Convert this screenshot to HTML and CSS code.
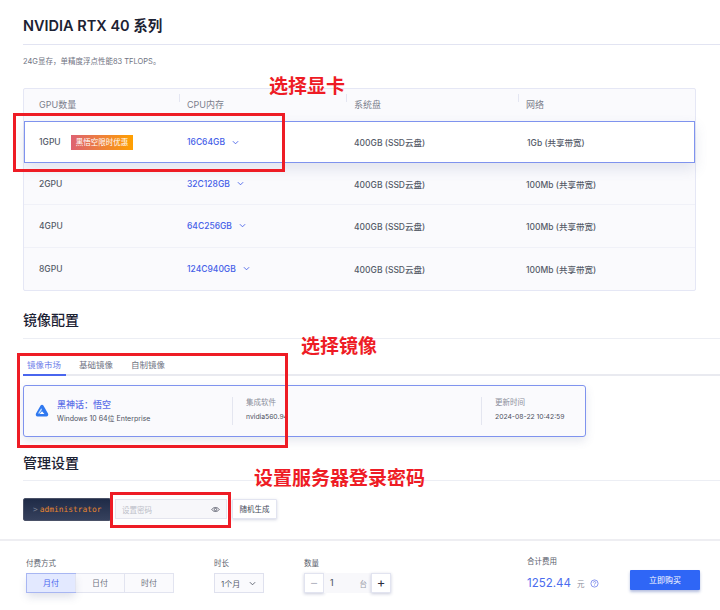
FILE: index.html
```html
<!DOCTYPE html>
<html lang="zh-CN">
<head>
    <meta charset="UTF-8">
    <meta name="viewport" content="width=device-width, initial-scale=1.0">
    <title>NVIDIA RTX 40 系列</title>
    <link rel="stylesheet" href="styles.css">
</head>
<body>
    <div class="config">
        <h1 class="series-title">NVIDIA RTX 40 系列</h1>
        <p class="series-desc">24G显存，单精度浮点性能83 TFLOPS。</p>

        <div class="spec-table">
            <div class="spec-row spec-head">
                <div class="cell cell-gpu"><span>GPU数量</span></div>
                <div class="cell cell-cpu"><i class="sep"></i><span>CPU内存</span></div>
                <div class="cell cell-disk"><i class="sep"></i><span>系统盘</span></div>
                <div class="cell cell-net"><i class="sep"></i><span>网络</span></div>
            </div>
            <div class="spec-row spec-active">
                <div class="cell cell-gpu"><span>1GPU</span><span class="promo">黑悟空限时优惠</span></div>
                <div class="cell cell-cpu"><span class="cpu-link">16C64GB<svg class="chev" viewBox="0 0 8 8"><path d="M1 2.5 4 5.5 7 2.5"/></svg></span></div>
                <div class="cell cell-disk"><span>400GB (SSD云盘)</span></div>
                <div class="cell cell-net"><span>1Gb (共享带宽)</span></div>
            </div>
            <div class="spec-row">
                <div class="cell cell-gpu"><span>2GPU</span></div>
                <div class="cell cell-cpu"><span class="cpu-link">32C128GB<svg class="chev" viewBox="0 0 8 8"><path d="M1 2.5 4 5.5 7 2.5"/></svg></span></div>
                <div class="cell cell-disk"><span>400GB (SSD云盘)</span></div>
                <div class="cell cell-net"><span>100Mb (共享带宽)</span></div>
            </div>
            <div class="spec-row">
                <div class="cell cell-gpu"><span>4GPU</span></div>
                <div class="cell cell-cpu"><span class="cpu-link">64C256GB<svg class="chev" viewBox="0 0 8 8"><path d="M1 2.5 4 5.5 7 2.5"/></svg></span></div>
                <div class="cell cell-disk"><span>400GB (SSD云盘)</span></div>
                <div class="cell cell-net"><span>100Mb (共享带宽)</span></div>
            </div>
            <div class="spec-row">
                <div class="cell cell-gpu"><span>8GPU</span></div>
                <div class="cell cell-cpu"><span class="cpu-link">124C940GB<svg class="chev" viewBox="0 0 8 8"><path d="M1 2.5 4 5.5 7 2.5"/></svg></span></div>
                <div class="cell cell-disk"><span>400GB (SSD云盘)</span></div>
                <div class="cell cell-net"><span>100Mb (共享带宽)</span></div>
            </div>
        </div>

        <h2 class="section-title">镜像配置</h2>
        <div class="tabs">
            <span class="tab tab-active">镜像市场</span>
            <span class="tab">基础镜像</span>
            <span class="tab">自制镜像</span>
        </div>
        <div class="image-card">
            <div class="image-main">
                <svg class="image-logo" viewBox="0 0 14 14">
                    <path d="M5.6 1.4 C6.3 .4 7.7 .4 8.4 1.4 L13 9.4 C13.7 10.6 12.9 12.4 11.4 12.4 L2.6 12.4 C1.1 12.4 .3 10.6 1 9.4 Z" fill="#2f78f0"/>
                    <path d="M3 9.6 6.2 4.2 7 5.6 4.6 9.6 Z" fill="#bfe0ff"/>
                    <path d="M7 7.2 9.4 10 4.6 10 Z" fill="#fff"/>
                </svg>
                <div>
                    <div class="image-name">黑神话：悟空</div>
                    <div class="image-os">Windows 10 64位 Enterprise</div>
                </div>
            </div>
            <div class="image-col image-soft">
                <div class="image-label">集成软件</div>
                <div class="image-value">nvidia560.94</div>
            </div>
            <div class="image-col image-time">
                <div class="image-label">更新时间</div>
                <div class="image-value">2024-08-22 10:42:59</div>
            </div>
        </div>

        <h2 class="section-title admin-title">管理设置</h2>
        <div class="admin-row">
            <div class="admin-user"><span class="prompt">&gt;</span>administrator</div>
            <div class="pwd-input">
                <span class="pwd-hint">设置密码</span>
                <svg class="eye" viewBox="0 0 12 12"><path d="M1 6C3.5 2.4 8.5 2.4 11 6 8.5 9.6 3.5 9.6 1 6Z"/><circle cx="6" cy="6" r="1.6"/></svg>
            </div>
            <div class="random-btn">随机生成</div>
        </div>
    </div>

    <div class="buy-bar">
        <div class="buy-group buy-pay">
            <div class="buy-label">付费方式</div>
            <div class="pay-options">
                <span class="pay-option pay-active">月付</span>
                <span class="pay-option">日付</span>
                <span class="pay-option">时付</span>
            </div>
        </div>
        <div class="buy-group buy-time">
            <div class="buy-label">时长</div>
            <div class="month-select">1个月<svg class="chev chev-dark" viewBox="0 0 8 8"><path d="M1 2.5 4 5.5 7 2.5"/></svg></div>
        </div>
        <div class="buy-group buy-count">
            <div class="buy-label">数量</div>
            <div class="stepper">
                <span class="step step-off">−</span>
                <span class="step-value"><b>1</b><em>台</em></span>
                <span class="step">+</span>
            </div>
        </div>
        <div class="buy-group buy-total">
            <div class="buy-label">合计费用</div>
            <div class="total-line">
                <span class="total-num">1252.44</span>
                <span class="total-unit">元</span>
                <svg class="help" viewBox="0 0 10 10"><circle cx="5" cy="5" r="4"/><path d="M3.7 4C3.7 2.4 6.4 2.4 6.4 4 6.4 5 5 5 5 6.1M5 7V7.6"/></svg>
            </div>
        </div>
        <div class="buy-btn">立即购买</div>
    </div>

    <div class="mark mark-gpu"></div>
    <div class="mark mark-image"></div>
    <div class="mark mark-pwd"></div>
    <div class="note note-gpu">选择显卡</div>
    <div class="note note-image">选择镜像</div>
    <div class="note note-pwd">设置服务器登录密码</div>
</body>
</html>
```

FILE: styles.css
```css
* {
  box-sizing: border-box;
}

body {
  margin: 0;
  width: 720px;
  height: 610px;
  position: relative;
  overflow: hidden;
  background: #fff;
  color: #555a68;
  font-family: Inter, "Noto Sans CJK SC", sans-serif;
  font-size: 9px;
}

.config {
  padding: 0 0 0 23px;
  height: 541px;
  border-bottom: 2px solid #eeeef2;
}

.series-title {
  margin: 0;
  width: 697px;
  height: 45px;
  padding-top: 15px;
  border-bottom: 1px solid #e2e4f2;
  font-size: 14.5px;
  line-height: 21px;
  font-weight: 600;
  color: #1c2233;
}

.series-desc {
  margin: 0;
  padding-top: 11px;
  font-size: 7.5px;
  line-height: 11px;
  color: #6f7382;
}

.spec-table {
  width: 673px;
  margin-top: 21px;
  background: #fafafd;
  border: 1px solid #e5e7f5;
  border-radius: 2px;
}

.spec-row {
  display: grid;
  grid-template-columns: 148px 167px 172px 1fr;
  height: 42.2px;
  align-items: center;
  padding-left: 15px;
  font-size: 8.5px;
  font-weight: 500;
  border-bottom: 1px solid #f0f1f8;
}

.spec-row:last-child {
  border-bottom: none;
}

.spec-head {
  height: 32px;
  padding-bottom: 2px;
  font-size: 9px;
  font-weight: 400;
  color: #7b7e8c;
  border-bottom: none;
}

.spec-active {
  padding-left: 14px;
  grid-template-columns: 148px 167px 173px 1fr;
  background: #fff;
  border: 1px solid #7f93ee;
  box-shadow: 0 6px 14px rgba(80, 90, 140, 0.14);
  position: relative;
}

.cell {
  display: flex;
  align-items: center;
  position: relative;
}

.sep {
  position: absolute;
  left: -8px;
  top: -4px;
  width: 1px;
  height: 8px;
  background: #e4e6f2;
}

.promo {
  margin-left: 10px;
  padding: 0 5px;
  height: 15px;
  line-height: 15px;
  font-size: 7.5px;
  font-weight: 400;
  color: #fff;
  background: linear-gradient(90deg, #de6272, #ffa000);
}

.cpu-link {
  display: flex;
  align-items: center;
  color: #4560e8;
}

.chev {
  width: 7px;
  height: 7px;
  margin-left: 7px;
  fill: none;
  stroke: #4560e8;
  stroke-width: 1;
}

.chev-dark {
  stroke: #555a68;
  margin-left: 9px;
}

.section-title {
  margin: 0;
  width: 697px;
  height: 40px;
  margin-top: 8px;
  padding-top: 11px;
  border-bottom: 1px solid #eceef4;
  font-size: 14px;
  line-height: 20px;
  font-weight: 500;
  color: #1c2233;
}

.tabs {
  display: flex;
  width: 697px;
  height: 37px;
  padding-top: 20px;
  border-bottom: 2px solid #e9eaf0;
  font-size: 8.5px;
  color: #6f7382;
}

.tab {
  height: 17px;
  line-height: 12px;
  padding: 0 5px 0 4px;
  margin-right: 9px;
}

.tab-active {
  color: #6f80ea;
  border-bottom: 2px solid #4a66ee;
}

.image-card {
  display: flex;
  align-items: center;
  width: 563px;
  height: 52px;
  margin-top: 9px;
  background: #fafafd;
  border: 1px solid #7f93ee;
  border-radius: 3px;
  box-shadow: 0 4px 10px rgba(80, 90, 140, 0.14);
}

.image-main {
  display: flex;
  align-items: center;
  width: 208px;
  padding-left: 11px;
}

.image-logo {
  width: 14px;
  height: 14px;
  margin-right: 8px;
}

.image-name {
  font-size: 9px;
  line-height: 13px;
  font-weight: 500;
  color: #5b6ee8;
}

.image-os {
  margin-top: 2px;
  font-size: 7px;
  line-height: 11px;
  color: #4c505e;
}

.image-col {
  height: 28px;
  padding-left: 13px;
  border-left: 1px solid #e4e6f0;
}

.image-soft {
  width: 249px;
}

.image-label {
  font-size: 7.5px;
  line-height: 11px;
  color: #8b8e9b;
}

.image-value {
  margin-top: 3px;
  font-size: 6.8px;
  line-height: 11px;
  color: #4c505e;
}

.admin-title {
  margin-top: 6px;
  height: 38px;
  padding-top: 10px;
}

.admin-row {
  display: flex;
  align-items: center;
  margin-top: 17px;
  height: 23px;
}

.admin-user {
  display: flex;
  align-items: center;
  width: 88px;
  height: 23px;
  padding-left: 9px;
  background: linear-gradient(180deg, #1f2b47, #36415d);
  border: 1px solid #4a5167;
  border-radius: 2px;
  font-family: "DejaVu Sans Mono", "Liberation Mono", monospace;
  font-size: 7.9px;
  color: #e8852e;
}

.prompt {
  margin-right: 2px;
  color: #7c8296;
}

.pwd-input {
  display: flex;
  align-items: center;
  justify-content: space-between;
  width: 112px;
  height: 20px;
  margin-left: 4px;
  padding: 0 6px;
  background: #f7f7fa;
  border: 1px solid #e4e5ee;
}

.pwd-hint {
  font-size: 7.5px;
  color: #bcbec8;
}

.eye {
  width: 9px;
  height: 9px;
  fill: none;
  stroke: #5a5e6c;
  stroke-width: 1.2;
}

.random-btn {
  width: 45px;
  height: 20px;
  margin-left: 5px;
  line-height: 19px;
  text-align: center;
  font-size: 7.5px;
  color: #444857;
  background: #fff;
  border: 1px solid #e2e4f0;
  border-radius: 1px;
  box-shadow: 0 1px 3px rgba(80, 90, 140, 0.25);
}

.buy-bar {
  display: flex;
  height: 67px;
  padding-left: 26px;
  padding-top: 17px;
}

.buy-label {
  font-size: 7.5px;
  line-height: 11px;
  color: #5a5e6c;
}

.buy-pay {
  width: 188px;
}

.buy-time {
  width: 90px;
}

.buy-count {
  width: 223px;
}

.buy-total {
  width: 103px;
  margin-top: -2px;
}

.pay-options {
  display: flex;
  width: 148px;
  height: 20px;
  margin-top: 4px;
  background: #fafafd;
  border: 1px solid #e2e4f0;
}

.pay-option {
  flex: 1;
  line-height: 18px;
  text-align: center;
  font-size: 8px;
  color: #6f7382;
  border-left: 1px solid #e2e4f0;
}

.pay-active {
  color: #4a66ee;
  background: #e3e9ff;
  outline: 1px solid #a8b6f2;
  border-left: none;
  box-shadow: 0 5px 8px rgba(80, 90, 140, 0.18);
}

.month-select {
  display: flex;
  align-items: center;
  width: 50px;
  height: 20px;
  margin-top: 4px;
  padding-left: 6px;
  font-size: 8px;
  color: #555a68;
  background: #fafafd;
  border: 1px solid #dfe1ee;
}

.stepper {
  display: flex;
  height: 20px;
  margin-top: 4px;
}

.step {
  width: 20px;
  line-height: 17px;
  text-align: center;
  font-size: 13px;
  color: #2a2e3c;
  background: #fff;
  border: 1px solid #e2e4f0;
  box-shadow: 0 1px 3px rgba(80, 90, 140, 0.3);
}

.step-off {
  color: #b6b8c4;
}

.step-value {
  display: flex;
  align-items: center;
  justify-content: space-between;
  width: 47px;
  padding: 0 4px 0 6px;
  background: #f8f8fb;
  font-size: 8.5px;
}

.step-value b {
  font-weight: 500;
}

.step-value em {
  font-style: normal;
  font-size: 7.5px;
  color: #9a9da9;
}

.total-line {
  display: flex;
  align-items: center;
  margin-top: 7px;
}

.total-num {
  font-size: 11.5px;
  line-height: 18px;
  color: #4a6cee;
}

.total-unit {
  margin-left: 6px;
  font-size: 7.5px;
  color: #8b8e9b;
}

.help {
  width: 9px;
  height: 9px;
  margin-left: 6px;
  fill: none;
  stroke: #6f80ea;
  stroke-width: 0.9;
}

.buy-btn {
  width: 70px;
  height: 20px;
  margin-top: 12px;
  line-height: 20px;
  text-align: center;
  font-size: 8px;
  color: #fff;
  background: #2f66f6;
  border-radius: 1px;
  box-shadow: 0 2px 3px rgba(40, 70, 160, 0.35);
}

/* red marks drawn on top of the shot */
.mark {
  position: absolute;
  border: 3px solid #ee1c25;
}

.mark-gpu {
  left: 13px;
  top: 113px;
  width: 272px;
  height: 59px;
}

.mark-image {
  left: 17px;
  top: 353px;
  width: 271px;
  height: 95px;
}

.mark-pwd {
  left: 110px;
  top: 492px;
  width: 121px;
  height: 36px;
}

.note {
  position: absolute;
  font-size: 19px;
  line-height: 24px;
  font-weight: 700;
  color: #ee1c25;
  white-space: nowrap;
}

.note-gpu {
  left: 269px;
  top: 75px;
}

.note-image {
  left: 301px;
  top: 335px;
}

.note-pwd {
  left: 254px;
  top: 467px;
}
```
